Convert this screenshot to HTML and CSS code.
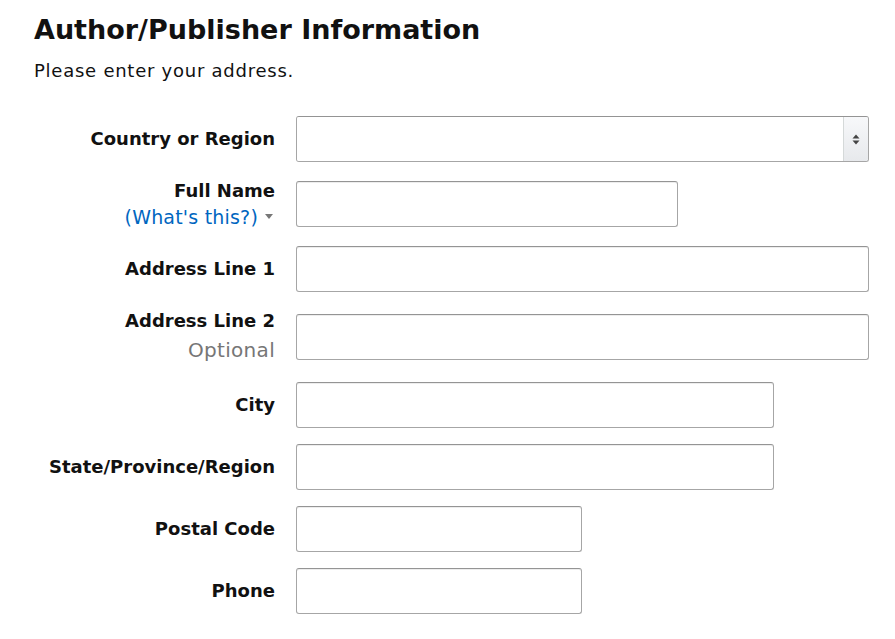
FILE: index.html
```html
<!DOCTYPE html>
<html lang="en">
<head>
<meta charset="utf-8">
<title>Author/Publisher Information</title>
<link rel="stylesheet" href="styles.css">
</head>
<body>
<main class="page">
  <h1 class="title">Author/Publisher Information</h1>
  <p class="subtitle">Please enter your address.</p>

  <form class="form">
    <div class="row">
      <div class="label"><span class="label-text">Country or Region</span></div>
      <div class="field">
        <div class="select w-full">
          <span class="select-value"></span>
          <span class="select-arrows">
            <svg width="8" height="11" viewBox="0 0 8 11"><path d="M4 0.5 L7.5 4.5 H0.5 Z" fill="#444"/><path d="M4 10.5 L7.5 6.5 H0.5 Z" fill="#444"/></svg>
          </span>
        </div>
      </div>
    </div>

    <div class="row">
      <div class="label">
        <span class="label-text">Full Name</span>
        <span class="label-sub"><a class="link" href="#">(What's this?)</a><span class="caret"></span></span>
      </div>
      <div class="field"><input class="input w-2-3" type="text"></div>
    </div>

    <div class="row">
      <div class="label"><span class="label-text">Address Line 1</span></div>
      <div class="field"><input class="input w-full" type="text"></div>
    </div>

    <div class="row">
      <div class="label">
        <span class="label-text">Address Line 2</span>
        <span class="label-optional">Optional</span>
      </div>
      <div class="field"><input class="input w-full" type="text"></div>
    </div>

    <div class="row">
      <div class="label"><span class="label-text">City</span></div>
      <div class="field"><input class="input w-5-6" type="text"></div>
    </div>

    <div class="row">
      <div class="label"><span class="label-text">State/Province/Region</span></div>
      <div class="field"><input class="input w-5-6" type="text"></div>
    </div>

    <div class="row">
      <div class="label"><span class="label-text">Postal Code</span></div>
      <div class="field"><input class="input w-half" type="text"></div>
    </div>

    <div class="row">
      <div class="label"><span class="label-text">Phone</span></div>
      <div class="field"><input class="input w-half" type="text"></div>
    </div>
  </form>
</main>
</body>
</html>
```

FILE: styles.css
```css
* { box-sizing: border-box; }

html, body {
  margin: 0;
  padding: 0;
  background: #ffffff;
}

body {
  font-family: "DejaVu Sans", "Liberation Sans", sans-serif;
  color: #111111;
}

.page {
  padding: 13px 0 0 34px;
  width: 868px;
}

.title {
  margin: 0;
  font-size: 27px;
  line-height: 34px;
  font-weight: 700;
  color: #111111;
}

.subtitle {
  margin: 13px 0 0;
  font-size: 18px;
  line-height: 22px;
  letter-spacing: 0.75px;
  color: #111111;
}

.form {
  margin-top: 34px;
  display: flex;
  flex-direction: column;
  gap: 16px;
}

.row {
  display: grid;
  grid-template-columns: 241px 573px;
  column-gap: 21px;
  align-items: center;
}

.label {
  display: flex;
  flex-direction: column;
  align-items: flex-end;
  text-align: right;
}

.label-text {
  font-size: 18px;
  line-height: 26px;
  font-weight: 700;
  color: #111111;
}

.label-sub {
  display: flex;
  align-items: center;
  font-size: 19px;
  line-height: 26px;
  letter-spacing: 0.2px;
}

.link {
  color: #0066c0;
  text-decoration: none;
}

.caret {
  display: inline-block;
  width: 0;
  height: 0;
  margin-left: 7px;
  margin-right: 2px;
  border-left: 4.5px solid transparent;
  border-right: 4.5px solid transparent;
  border-top: 5px solid #777777;
  position: relative;
  top: -1px;
}

.label-optional {
  font-size: 20px;
  line-height: 32px;
  letter-spacing: 0.3px;
  color: #767676;
}

.field {
  display: flex;
}

.input {
  display: block;
  height: 46px;
  margin: 0;
  padding: 3px 7px;
  font-family: inherit;
  font-size: 16px;
  background: #ffffff;
  border: 1px solid #a6a6a6;
  border-top-color: #949494;
  border-radius: 3px;
  box-shadow: 0 1px 0 rgba(255, 255, 255, 0.5), inset 0 1px 0 rgba(0, 0, 0, 0.07);
  outline: none;
}

.w-full { width: 100%; }
.w-2-3 { width: 382px; }
.w-5-6 { width: 478px; }
.w-half { width: 286px; }

.select {
  display: flex;
  height: 46px;
  border: 1px solid #a6a6a6;
  border-top-color: #949494;
  border-radius: 3px;
  box-shadow: inset 0 1px 0 rgba(0, 0, 0, 0.07);
  overflow: hidden;
}

.select-value {
  flex: 1;
  background: #ffffff;
}

.select-arrows {
  width: 25px;
  display: flex;
  align-items: center;
  justify-content: center;
  border-left: 1px solid #d5d9d9;
  background: linear-gradient(to bottom, #f7f8fa, #e7e9ec);
}
```
